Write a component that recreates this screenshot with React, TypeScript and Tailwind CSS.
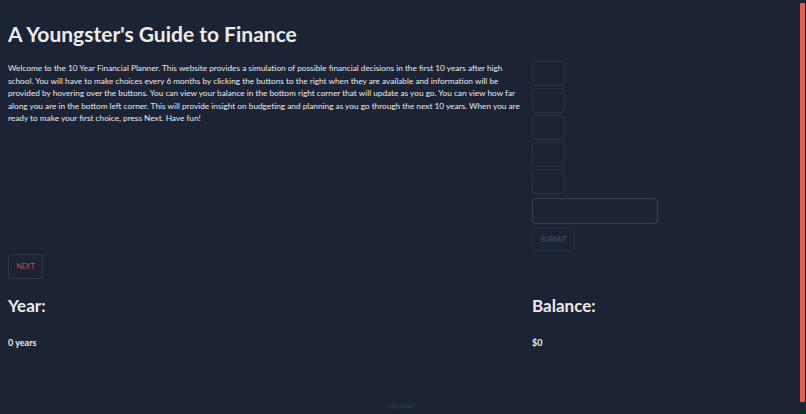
import { useState } from 'react';

const intro =
  'Welcome to the 10 Year Financial Planner. This website provides a simulation of possible financial decisions in the first 10 years after high school. You will have to make choices every 6 months by clicking the buttons to the right when they are available and information will be provided by hovering over the buttons. You can view your balance in the bottom right corner that will update as you go. You can view how far along you are in the bottom left corner. This will provide insight on budgeting and planning as you go through the next 10 years. When you are ready to make your first choice, press Next. Have fun!';

export default function App() {
  const [years, setYears] = useState(0);
  const [balance] = useState(0);
  const [amount, setAmount] = useState('');
  const choices = ['', '', '', '', ''];

  return (
    <div className="h-screen flex bg-[#1b2334] text-[#ececec] font-['Lato','Liberation_Sans',sans-serif] overflow-hidden">
      <main className="flex-1 flex flex-col px-2">
        <h1 className="text-[21px] font-bold leading-[30px] pt-[19px]">A Youngster's Guide to Finance</h1>

        <div className="grid grid-cols-[516px_1fr] gap-x-2 mt-[12px]">
          <p className="text-[8.25px] leading-[12.6px] pt-[1px]">{intro}</p>
          <div className="flex flex-col gap-[2px]">
            {choices.map((c, i) => (
              <button
                key={i}
                disabled
                className="w-[33px] h-[25px] rounded-[4px] border border-[#2a3243] text-[8px]"
              >
                {c}
              </button>
            ))}
            <input
              value={amount}
              onChange={(e) => setAmount(e.target.value)}
              className="mt-[2px] w-[126px] h-[26px] rounded-[4px] border border-[#384052] bg-transparent outline-none px-2 text-[9px]"
            />
            <button
              disabled
              className="mt-[2px] w-[43px] h-[23px] rounded-[4px] border border-[#252d3d] text-[7px] text-[#4a5264]"
            >
              SUBMIT
            </button>
          </div>
        </div>

        <button
          onClick={() => setYears(years + 0.5)}
          className="mt-[3px] w-[35px] h-[25px] rounded-[4px] border border-[#30374a] text-[7px] text-[#c0504e]"
        >
          NEXT
        </button>

        <div className="grid grid-cols-[516px_1fr] gap-x-2 mt-[16px]">
          <div>
            <h2 className="text-[17px] font-bold leading-[22px]">Year:</h2>
            <p className="text-[9px] font-bold mt-[19px]">{years} years</p>
          </div>
          <div>
            <h2 className="text-[17px] font-bold leading-[22px]">Balance:</h2>
            <p className="text-[9px] font-bold mt-[19px]">${balance}</p>
          </div>
        </div>

        <footer className="mt-auto pb-[4px] text-center text-[5px] text-[#3a4254]">Tulpy Inside</footer>
      </main>

      {/* scroll track */}
      <div className="w-[6px] flex flex-col pt-[3px] pb-[12px] pr-[1px]">
        <div className="flex-1 bg-[#e0604f] rounded-[1px]" />
      </div>
    </div>
  );
}
